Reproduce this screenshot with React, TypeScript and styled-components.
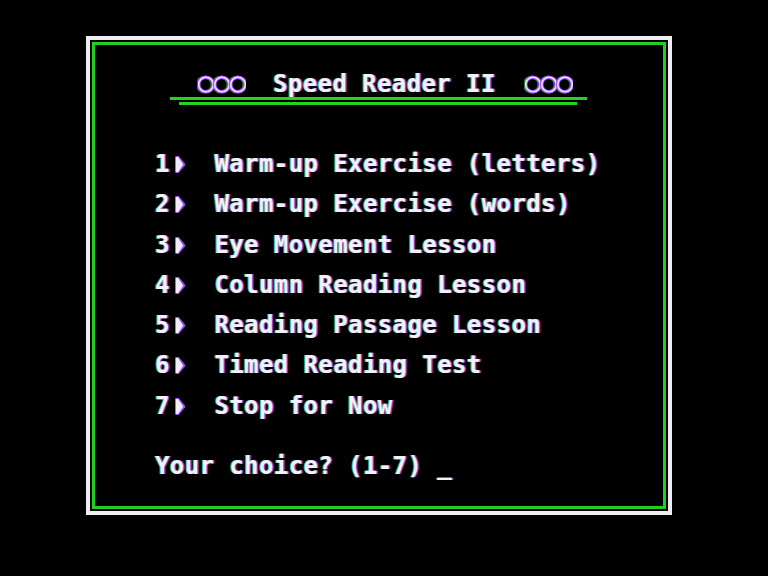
import { createGlobalStyle, styled } from 'styled-components';

const CELL = 14.85;

const MENU_ITEMS = [
  'Warm-up Exercise (letters)',
  'Warm-up Exercise (words)',
  'Eye Movement Lesson',
  'Column Reading Lesson',
  'Reading Passage Lesson',
  'Timed Reading Test',
  'Stop for Now',
];

function Rings() {
  return (
    <StyledRings width="48" height="19" viewBox="0 0 48 19">
      {[8, 24, 40].map((cx) => (
        <g key={cx}>
          <circle cx={cx} cy="9.5" r="7.3" fill="none" stroke="#a24cff" strokeWidth="3.6" />
          <circle cx={cx} cy="9.5" r="7.3" fill="none" stroke="#ece2ff" strokeWidth="1.6" />
        </g>
      ))}
    </StyledRings>
  );
}

function Marker() {
  return (
    <StyledMarker width={CELL} height="17" viewBox={`0 0 ${CELL} 17`}>
      <polygon points="5.4,0 8.6,0 15,7.5 15,9.5 8.6,17 5.4,17" fill="#a24cff" />
      <polygon points="5.6,1 8.2,1 13.2,8.5 8.2,16 5.6,16" fill="#f2ecff" />
    </StyledMarker>
  );
}

function App() {
  return (
    <>
      <GlobalStyle />
      <StyledScreen>
        <StyledFrame>
          <StyledTitleRow>
            <Rings />
            <StyledTitle>Speed Reader II</StyledTitle>
            <Rings />
          </StyledTitleRow>
          <StyledRule $offset={75} $width={417} />
          <StyledRule $offset={84} $width={398} $gap={2} />
          <StyledMenu>
            {MENU_ITEMS.map((text, i) => (
              <StyledLine key={text}>
                {i + 1}
                <Marker />
                {'  '}
                {text}
              </StyledLine>
            ))}
          </StyledMenu>
          <StyledPrompt>Your choice? (1-7) _</StyledPrompt>
        </StyledFrame>
      </StyledScreen>
    </>
  );
}

export default App;

const GlobalStyle = createGlobalStyle`
  html, body {
    margin: 0;
    padding: 0;
    background: #000;
  }
  #root {
    width: 768px;
    height: 576px;
    overflow: hidden;
    background: #000;
  }
`;

const StyledScreen = styled.div`
  box-sizing: border-box;
  width: 586px;
  height: 479px;
  margin: 36px 0 0 86px;
  padding: 2px;
  border: 4px solid #efeef2;
`;

const StyledFrame = styled.div`
  box-sizing: border-box;
  display: flex;
  flex-direction: column;
  height: 100%;
  border: 3px solid #1fd01f;
  font-family: 'DejaVu Sans Mono', 'Liberation Mono', monospace;
  font-weight: 700;
  font-size: 24px;
  letter-spacing: 0.4px;
  color: #f4eeff;
  text-shadow:
    -1px 0 rgba(70, 220, 70, 0.75),
    1.5px 0 rgba(165, 70, 255, 0.85);
`;

const StyledTitleRow = styled.div`
  display: flex;
  align-items: center;
  height: 24px;
  margin-top: 27px;
  padding-left: 103px;
`;

const StyledRings = styled.svg`
  display: block;
  flex-shrink: 0;
  filter: drop-shadow(-1px 0 rgba(70, 220, 70, 0.6));
`;

const StyledTitle = styled.span`
  line-height: 24px;
  white-space: pre;
  margin: 0 29px 0 27px;
`;

const StyledRule = styled.div<{ $offset: number; $width: number; $gap?: number }>`
  width: ${({ $width }) => $width}px;
  height: 3px;
  margin-top: ${({ $gap }) => $gap ?? 1}px;
  margin-left: ${({ $offset }) => $offset}px;
  background: #22d422;
`;

const StyledMenu = styled.div`
  display: flex;
  flex-direction: column;
  margin-top: 39px;
  padding-left: 60px;
`;

const StyledLine = styled.div`
  line-height: 40.3px;
  white-space: pre;
`;

const StyledMarker = styled.svg`
  display: inline-block;
  vertical-align: -1px;
`;

const StyledPrompt = styled.div`
  margin-top: 19.7px;
  padding-left: 60px;
  line-height: 40.3px;
  white-space: pre;
`;
